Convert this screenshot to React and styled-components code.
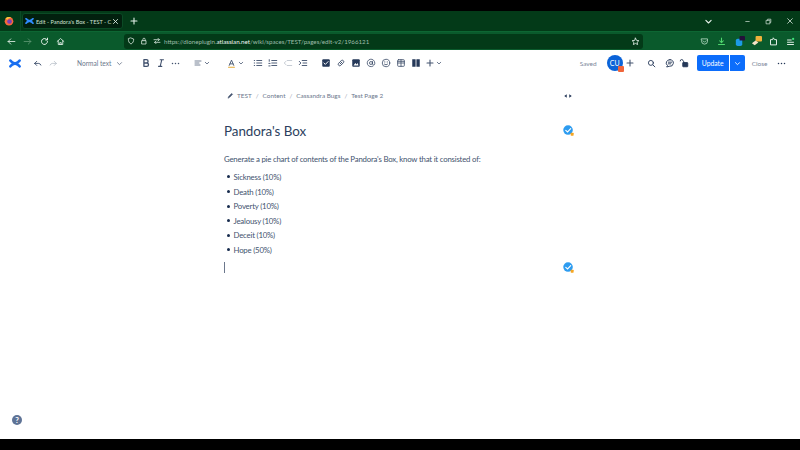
import React from 'react';
import styled, { createGlobalStyle } from 'styled-components';

const GlobalStyle = createGlobalStyle`
  html, body {
    margin: 0;
    padding: 0;
    width: 800px;
    height: 450px;
    overflow: hidden;
    background: #000;
    font-family: Lato, "Open Sans", "Liberation Sans", sans-serif;
  }
`;

const Page = styled.div`
  width: 800px;
  height: 450px;
  display: flex;
  flex-direction: column;
  background: #000;
`;

const TabBar = styled.div`
  margin-top: 11px;
  height: 20px;
  flex: none;
  display: flex;
  align-items: center;
  background: #033a18;
  color: #dfeee4;
`;

const BrowserLogo = styled.div`
  width: 21px;
  height: 20px;
  display: flex;
  align-items: center;
  justify-content: center;
  flex: none;
  box-sizing: border-box;
  padding-right: 3px;
  border-right: 1px solid #0b4a25;
`;

const Tab = styled.div`
  width: 101px;
  height: 16px;
  flex: none;
  display: flex;
  align-items: center;
  gap: 2px;
  padding: 0 3px 0 2px;
  margin-left: 1px;
  box-sizing: border-box;
  background: #02200e;
  border: 1px solid #0b4a25;
  border-radius: 3px;
  svg {
    flex: none;
  }
`;

const TabTitle = styled.span`
  flex: 1;
  min-width: 0;
  font-size: 5.6px;
  white-space: nowrap;
  color: #cfe0d5;
`;

const WindowControls = styled.div`
  margin-left: auto;
  display: flex;
  align-items: center;
`;

const NavBar = styled.div`
  height: 19px;
  flex: none;
  display: flex;
  align-items: center;
  background: #0a5a2c;
  border-top: 1px solid #0d6633;
  box-sizing: border-box;
  padding-left: 3px;
`;

const NavButton = styled.div`
  width: ${({ $w }) => $w || 16.5}px;
  height: 16px;
  flex: none;
  margin-left: ${({ $gap }) => $gap || 0}px;
  display: flex;
  align-items: center;
  justify-content: center;
  color: ${({ $dim }) => ($dim ? '#5d9673' : '#e6f2ea')};
`;

const UrlBar = styled.div`
  width: 519px;
  height: 15px;
  margin-left: 55px;
  flex: none;
  display: flex;
  align-items: center;
  background: #033a18;
  border-radius: 3px;
  box-sizing: border-box;
  padding-right: 1px;
  color: #d5e6db;
`;

const UrlText = styled.span`
  font-size: 6.2px;
  color: #9fbdaa;
  white-space: nowrap;
  flex: 1;
  margin-left: 1px;
  b {
    font-weight: 400;
    color: #f2f7f4;
  }
`;

const ExtensionGroup = styled.div`
  margin-left: auto;
  display: flex;
  align-items: center;
`;

const Toolbar = styled.div`
  height: 26px;
  flex: none;
  display: flex;
  align-items: center;
  background: #fff;
  padding-left: 7px;
  color: #42526e;
`;

const ToolSlot = styled.div`
  width: ${({ $w }) => $w || 15}px;
  height: 16px;
  flex: none;
  margin-left: ${({ $gap }) => $gap || 0}px;
  display: flex;
  align-items: center;
  justify-content: center;
  gap: 2px;
  color: ${({ $color }) => $color || '#42526e'};
`;

const StyleSelect = styled.div`
  margin-left: 17px;
  width: 46px;
  flex: none;
  display: flex;
  align-items: center;
  justify-content: space-between;
  font-size: 6.6px;
  color: #6b778c;
  white-space: nowrap;
`;

const ToolbarRight = styled.div`
  margin-left: auto;
  display: flex;
  align-items: center;
  height: 100%;
`;

const Muted = styled.span`
  font-size: 6.5px;
  color: #7a869a;
  margin-left: ${({ $gap }) => $gap || 0}px;
  white-space: nowrap;
`;

const Avatar = styled.div`
  position: relative;
  width: 16px;
  height: 16px;
  margin-left: 10px;
  flex: none;
  border-radius: 50%;
  background: #0b63d8;
  color: #fff;
  font-size: 7px;
  display: flex;
  align-items: center;
  justify-content: center;
`;

const AvatarBadge = styled.span`
  position: absolute;
  right: -1px;
  bottom: -1px;
  width: 6px;
  height: 6px;
  border-radius: 1px;
  background: #f0653a;
`;

const UpdateButton = styled.div`
  margin-left: 7px;
  width: 32px;
  height: 16px;
  flex: none;
  display: flex;
  align-items: center;
  justify-content: center;
  background: #0c6dfb;
  border-radius: 2px 0 0 2px;
  color: #fff;
  font-size: 6.8px;
`;

const UpdateMenu = styled.div`
  margin-left: 1px;
  width: 15px;
  height: 16px;
  flex: none;
  display: flex;
  align-items: center;
  justify-content: center;
  background: #0c6dfb;
  border-radius: 0 2px 2px 0;
  color: #fff;
`;

const Editor = styled.main`
  position: relative;
  height: 363px;
  flex: none;
  background: #fff;
  display: flex;
  flex-direction: column;
  align-items: center;
`;

const Column = styled.div`
  width: 350px;
  padding-right: 2px;
  color: #172b4d;
`;

const Crumbs = styled.nav`
  height: 12px;
  margin-top: 13.5px;
  display: flex;
  align-items: center;
  font-size: 6.4px;
  color: #6b778c;
`;

const CrumbSep = styled.span`
  margin: 0 4px;
  color: #97a0af;
`;

const WidthToggle = styled.div`
  margin-left: auto;
  margin-right: 1px;
  display: flex;
  color: #253858;
`;

const TitleRow = styled.div`
  margin-top: 18px;
  height: 22px;
  display: flex;
  align-items: center;
  justify-content: space-between;
`;

const Title = styled.h1`
  margin: 0;
  font-size: 13.4px;
  font-weight: 400;
  letter-spacing: -0.05px;
  color: #2c3f5e;
`;

const Paragraph = styled.p`
  margin: 10.5px 0 0;
  height: 14px;
  line-height: 14px;
  font-size: 7.8px;
  letter-spacing: -0.2px;
  color: #42526e;
  white-space: nowrap;
`;

const Items = styled.ul`
  list-style: none;
  margin: 3.7px 0 0;
  padding: 0;
`;

const Item = styled.li`
  height: 14.6px;
  display: flex;
  align-items: center;
  gap: 4px;
  padding-left: 2.5px;
  font-size: 7.8px;
  letter-spacing: -0.2px;
  color: #42526e;
  &::before {
    content: '';
    width: 3px;
    height: 3px;
    border-radius: 50%;
    background: #172b4d;
  }
`;

const CursorRow = styled.div`
  margin-top: 2.7px;
  height: 16px;
  display: flex;
  align-items: center;
  justify-content: space-between;
`;

const Caret = styled.span`
  width: 1px;
  height: 11px;
  background: #6b778c;
`;

const HelpButton = styled.div`
  position: absolute;
  left: 12px;
  bottom: 14px;
  width: 10px;
  height: 10px;
  border-radius: 50%;
  background: #5e7396;
  color: #fff;
  font-size: 8px;
  font-weight: 700;
  line-height: 10px;
  text-align: center;
`;

const Glyph = ({ size = 10, children, fill = 'none', stroke = 'currentColor', sw = 1.1 }) => (
  <svg width={size} height={size} viewBox="0 0 12 12" fill={fill} stroke={stroke} strokeWidth={sw} strokeLinecap="round" strokeLinejoin="round">
    {children}
  </svg>
);

const Chevron = ({ size = 7 }) => (
  <Glyph size={size} sw={1.5}><path d="M2.5 4.5 6 8l3.5-3.5" /></Glyph>
);

const Dots = () => (
  <Glyph size={9} fill="currentColor" stroke="none">
    <circle cx="2" cy="6" r="1" /><circle cx="6" cy="6" r="1" /><circle cx="10" cy="6" r="1" />
  </Glyph>
);

const Plus = ({ size = 9 }) => (
  <Glyph size={size} sw={1.6}><path d="M6 1.5v9M1.5 6h9" /></Glyph>
);

const ConfluenceMark = ({ w = 12, h = 11, color = '#1a6ff0', sw = 3 }) => (
  <svg width={w} height={h} viewBox="0 0 14 13" fill="none" stroke={color} strokeWidth={sw} strokeLinecap="round">
    <path d="M1.5 3c1 1.6 2.6 2.8 5.5 3.5 3 .7 4.6 1.9 5.5 3.5" />
    <path d="M12.5 3c-1 1.6-2.6 2.8-5.5 3.5-3 .7-4.6 1.9-5.5 3.5" />
  </svg>
);

const Firefox = () => (
  <svg width="10" height="10" viewBox="0 0 12 12">
    <circle cx="6" cy="6.3" r="5.2" fill="#f7683a" />
    <circle cx="6.6" cy="6.6" r="2.8" fill="#7b3fb5" />
    <path d="M2 2.5C4 .5 8 .5 10 3c-2-1-4-.6-5 .7-1 1.3-2.5.6-3-1.2z" fill="#fcc23d" />
  </svg>
);

const VerifiedBadge = () => (
  <svg width="11" height="11" viewBox="0 0 12 12">
    <circle cx="5.5" cy="5.5" r="5.2" fill="#2d9cf0" />
    <path d="M3 5.8 5 7.6 8.4 3.9" fill="none" stroke="#fff" strokeWidth="1.2" strokeLinecap="round" />
    <rect x="8.4" y="8.4" width="3.2" height="3.2" rx=".6" fill="#f5a623" />
  </svg>
);

export default function App() {
  return (
    <>
      <GlobalStyle />
      <Page>
        <TabBar>
          <BrowserLogo><Firefox /></BrowserLogo>
          <Tab>
            <ConfluenceMark w={9} h={8} color="#2f8cff" />
            <TabTitle>Edit - Pandora's Box - TEST - C</TabTitle>
            <Glyph size={7} sw={1.5}><path d="m2.5 2.5 7 7M9.5 2.5l-7 7" /></Glyph>
          </Tab>
          <NavButton $w={22}><Plus size={8} /></NavButton>
          <WindowControls>
            <NavButton $w={20}><Chevron size={9} /></NavButton>
            <NavButton $w={21} $gap={19}><Glyph size={7}><path d="M3 6h6" /></Glyph></NavButton>
            <NavButton $w={21}><Glyph size={7}><path d="M2.5 4h6v6h-6zM4.5 4V2H10v5.5H8.5" /></Glyph></NavButton>
            <NavButton $w={21}><Glyph size={8}><path d="m2.5 2.5 7 7M9.5 2.5l-7 7" /></Glyph></NavButton>
          </WindowControls>
        </TabBar>

        <NavBar>
          <NavButton><Glyph size={9}><path d="M10.5 6h-9M5 2.5 1.5 6 5 9.5" /></Glyph></NavButton>
          <NavButton $dim><Glyph size={9}><path d="M1.5 6h9M7 2.5 10.5 6 7 9.5" /></Glyph></NavButton>
          <NavButton><Glyph size={9} sw={1.3}><path d="M10 6a4 4 0 1 1-1.2-2.9M10 1.5V4H7.5" /></Glyph></NavButton>
          <NavButton><Glyph size={9}><path d="M1.5 6 6 2l4.5 4M3 5v5h6V5M5 10V7.5h2V10" /></Glyph></NavButton>
          <UrlBar>
            <NavButton $w={14}><Glyph size={8}><path d="M6 1.5 10 3c0 3.5-1 6-4 7.5C3 9 2 6.5 2 3z" /></Glyph></NavButton>
            <NavButton $w={12}><Glyph size={8}><path d="M3 5.5h6v5H3zM4.3 5.5v-2a1.7 1.7 0 0 1 3.4 0v2" /></Glyph></NavButton>
            <NavButton $w={13}><Glyph size={8}><path d="M1.5 4h8M7.5 2l2 2-2 2M10.5 8h-8M4.5 6l-2 2 2 2" /></Glyph></NavButton>
            <UrlText>https://dioneplugin.<b>atlassian.net</b>/wiki/spaces/TEST/pages/edit-v2/1966121</UrlText>
            <NavButton $w={14}><Glyph size={9}><path d="m6 1.5 1.4 3 3.1.4-2.3 2.1.6 3.1L6 8.5l-2.800 1.600.6-3.100L1.500 4.900l3.100-.4z" /></Glyph></NavButton>
          </UrlBar>
          <ExtensionGroup>
            <NavButton $w={17}><Glyph size={9} stroke="#b9dcc6"><path d="M2 2.500h8v3a4 4 0 0 1-8 0zM4 5l2 2 2-2" /></Glyph></NavButton>
            <NavButton $w={17}><Glyph size={9} stroke="#4fd66e" sw={1.4}><path d="M6 1.500V7M3.500 5 6 7.500 8.500 5M2 10h8" /></Glyph></NavButton>
            <NavButton $w={18}><Glyph size={11} fill="#1c9be6" stroke="none"><rect x="2" y="3" width="7" height="8" rx="2" /><rect x="6" y="0" width="6" height="5" rx="1" fill="#24103a" /></Glyph></NavButton>
            <NavButton $w={17}><Glyph size={11} fill="#f0b23c" stroke="none"><rect x="5" y="0" width="7" height="6" rx="1" /><path d="M1 8 5 5l3 2-4 3z" fill="#f4e3c8" /></Glyph></NavButton>
            <NavButton $w={16}><Glyph size={9} sw={1.3}><path d="M6 1.500 7.500 3.500H10v7H2v-7h2.500z" /></Glyph></NavButton>
            <NavButton $w={19}><Glyph size={9} sw={1.3}><path d="M2 4h5M2 7h8M2 10h8" /><circle cx="9.500" cy="2.500" r="1.500" fill="#3fe07a" stroke="none" /></Glyph></NavButton>
          </ExtensionGroup>
        </NavBar>

        <Toolbar>
          <ToolSlot $w={16}><ConfluenceMark /></ToolSlot>
          <ToolSlot $gap={7}><Glyph><path d="M2 6.500 4.500 4M2 6.500 4.500 9M2 6.500h5a3 3 0 0 1 2.500 2" /></Glyph></ToolSlot>
          <ToolSlot $color="#c1c7d0"><Glyph><path d="M10 6.500 7.500 4M10 6.500 7.500 9M10 6.500H5a3 3 0 0 0-2.500 2" /></Glyph></ToolSlot>
          <StyleSelect>Normal text <Chevron /></StyleSelect>
          <ToolSlot $gap={15}><Glyph sw={1.6}><path d="M3.500 2h3a2 2 0 0 1 0 4h-3zM3.500 6h3.500a2 2 0 0 1 0 4h-3.500z" /></Glyph></ToolSlot>
          <ToolSlot><Glyph sw={1.3}><path d="M5 2h4M3 10h4M7 2 5 10" /></Glyph></ToolSlot>
          <ToolSlot><Dots /></ToolSlot>
          <ToolSlot $w={16} $gap={10.5}><Glyph size={8}><path d="M1.500 3h9M1.500 6h6M1.500 9h7.500" /></Glyph><Chevron size={6} /></ToolSlot>
          <ToolSlot $w={17} $gap={17}><Glyph size={9} sw={1.2}><path d="M3 8.500 6 1.500l3 7M4 6.500h4" /><path d="M2 11h8" stroke="#e2a020" /></Glyph><Chevron size={6} /></ToolSlot>
          <ToolSlot $gap={6.5}><Glyph><path d="M4.500 3h6M4.500 6h6M4.500 9h6M1.500 3h.5M1.500 6h.5M1.500 9h.5" /></Glyph></ToolSlot>
          <ToolSlot><Glyph><path d="M4.500 3h6M4.500 6h6M4.500 9h6M1.500 2v2M1 6.500h1.500M1 9.500h1.500" /></Glyph></ToolSlot>
          <ToolSlot $color="#c1c7d0"><Glyph><path d="M5 3h5.500M5 9h5.500M3.500 4 1.500 6l2 2" /></Glyph></ToolSlot>
          <ToolSlot><Glyph><path d="M5 3h5.500M6 6h4.500M5 9h5.500M1.500 4l2 2-2 2" /></Glyph></ToolSlot>
          <ToolSlot $gap={8}><Glyph fill="#253858" stroke="none"><rect x="1.500" y="1.500" width="9" height="9" rx="1.200" /><path d="M3.500 6 5.200 7.700 8.500 4.300" fill="none" stroke="#fff" strokeWidth="1.200" /></Glyph></ToolSlot>
          <ToolSlot><Glyph sw={1.2}><path d="M5 7 7 5M4.500 5 3 6.500a1.800 1.800 0 0 0 2.500 2.500L7 7.500M7.500 7 9 5.500A1.800 1.800 0 0 0 6.500 3L5 4.500" /></Glyph></ToolSlot>
          <ToolSlot><Glyph fill="#253858" stroke="none"><rect x="1.500" y="1.500" width="9" height="9" rx="1.200" /><path d="m3 9 2.200-3 1.500 1.700L8 6l1 3z" fill="#fff" /></Glyph></ToolSlot>
          <ToolSlot><Glyph sw={1}><circle cx="6" cy="6" r="1.800" /><path d="M7.800 4.200V7a1.300 1.300 0 0 0 2.700 0V6a4.500 4.500 0 1 0-2 3.700" /></Glyph></ToolSlot>
          <ToolSlot><Glyph sw={1}><circle cx="6" cy="6" r="4.500" /><path d="M4.500 4.500v.5M7.500 4.500v.5M4 7.300c1 1.100 3 1.100 4 0" /></Glyph></ToolSlot>
          <ToolSlot><Glyph sw={1}><rect x="2" y="2" width="8" height="8" rx="1" /><path d="M2 6h8M6 2v8M2 4h8" /></Glyph></ToolSlot>
          <ToolSlot><Glyph fill="#253858" stroke="none"><rect x="1.500" y="1.500" width="4" height="9" /><rect x="6.500" y="1.500" width="4" height="9" /></Glyph></ToolSlot>
          <ToolSlot $w={16} $gap={2.5}><Plus size={8} /><Chevron size={6} /></ToolSlot>
          <ToolbarRight>
            <Muted>Saved</Muted>
            <Avatar>CU<AvatarBadge /></Avatar>
            <ToolSlot $w={14}><Plus size={8} /></ToolSlot>
            <ToolSlot $gap={8} $w={14} $color="#253858"><Glyph size={9} sw={1.2}><circle cx="5.200" cy="5.200" r="3.300" /><path d="m8 8 2.500 2.500" /></Glyph></ToolSlot>
            <ToolSlot $gap={3} $w={16} $color="#253858"><Glyph sw={1.1}><path d="M6 2a4.500 4 0 0 0-3 7L2 10.800 5 10a4.500 4 0 1 0 1-8zM4 5h4M4 7h3" /></Glyph></ToolSlot>
            <ToolSlot $w={12} $color="#253858"><Glyph><rect x="4.500" y="5.500" width="6" height="5" rx=".6" fill="currentColor" /><path d="M1.500 3.500a1.700 1.700 0 0 1 3.400 0l2 2" /></Glyph></ToolSlot>
            <UpdateButton>Update</UpdateButton>
            <UpdateMenu><Chevron /></UpdateMenu>
            <Muted $gap={7}>Close</Muted>
            <ToolSlot $gap={6.5} $w={15} $color="#253858"><Dots /></ToolSlot>
            <ToolSlot $w={11} />
          </ToolbarRight>
        </Toolbar>

        <Editor>
          <Column>
            <Crumbs>
              <ToolSlot $w={13}><Glyph size={7} fill="currentColor"><path d="M2 10 3 7.500 8 2.500 9.500 4 4.500 9z" /></Glyph></ToolSlot>
              <span>TEST</span>
              <CrumbSep>/</CrumbSep>
              <span>Content</span>
              <CrumbSep>/</CrumbSep>
              <span>Cassandra Bugs</span>
              <CrumbSep>/</CrumbSep>
              <span>Test Page 2</span>
              <WidthToggle>
                <Glyph size={10} fill="currentColor" stroke="none"><path d="M4.500 4v4L1.500 6zM7.500 4v4l3-2z" /></Glyph>
              </WidthToggle>
            </Crumbs>
            <TitleRow>
              <Title>Pandora's Box</Title>
              <VerifiedBadge />
            </TitleRow>
            <Paragraph>Generate a pie chart of contents of the Pandora's Box, know that it consisted of:</Paragraph>
            <Items>
              <Item>Sickness (10%)</Item>
              <Item>Death (10%)</Item>
              <Item>Poverty (10%)</Item>
              <Item>Jealousy (10%)</Item>
              <Item>Deceit (10%)</Item>
              <Item>Hope (50%)</Item>
            </Items>
            <CursorRow>
              <Caret />
              <VerifiedBadge />
            </CursorRow>
          </Column>
          <HelpButton>?</HelpButton>
        </Editor>
      </Page>
    </>
  );
}
